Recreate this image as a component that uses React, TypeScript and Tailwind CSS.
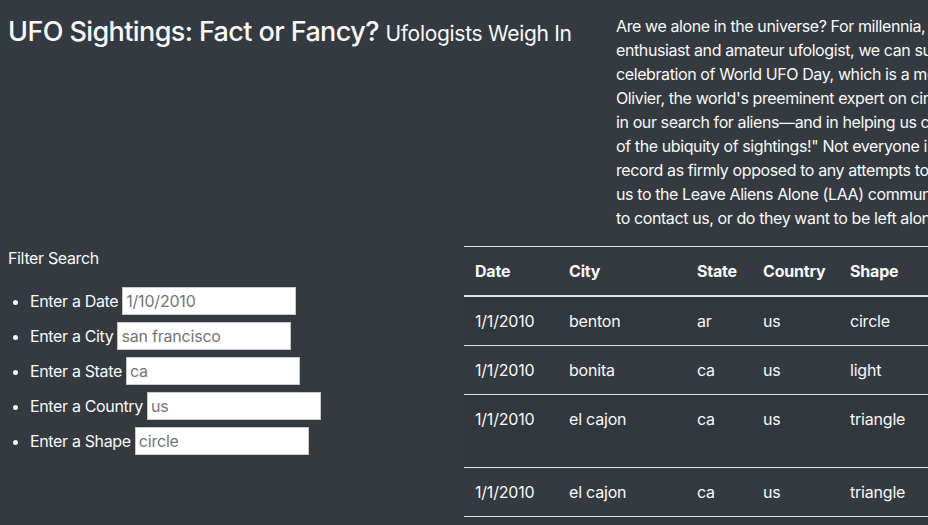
import React from 'react';

const intro = [
  'Are we alone in the universe? For millennia, humans have gazed at the night sky and wondered. As an avid UFO',
  'enthusiast and amateur ufologist, we can surmise that the answer is a resounding "No!" In honor of our',
  'celebration of World UFO Day, which is a most sacred holiday for us, we spoke with the esteemed Dana',
  "Olivier, the world's preeminent expert on circular objects in the sky. \"The internet has been a great help",
  'in our search for aliens—and in helping us convince skeptics,\" said Olivier. \"Just look at this data and see',
  'of the ubiquity of sightings!" Not everyone is convinced, though. Some ufologists have gone on the',
  'record as firmly opposed to any attempts to reach out to extraterrestrials. Their concerns have led',
  'us to the Leave Aliens Alone (LAA) community, which asks an important question: do aliens want us',
  'to contact us, or do they want to be left alone? We may never know the answer.',
];

const filters = [
  { label: 'Enter a Date', value: '1/10/2010' },
  { label: 'Enter a City', value: 'san francisco' },
  { label: 'Enter a State', value: 'ca' },
  { label: 'Enter a Country', value: 'us' },
  { label: 'Enter a Shape', value: 'circle' },
];

const sightings = [
  { date: '1/1/2010', city: 'benton', state: 'ar', country: 'us', shape: 'circle', duration: '5 mins.', comments: ['4 bright green circles high in the sky going in circles then one bright green light at my front door.'] },
  { date: '1/1/2010', city: 'bonita', state: 'ca', country: 'us', shape: 'light', duration: '13 minutes', comments: ['Three bright red lights witnessed floating stationary over San Diego New Years Day 2010'] },
  { date: '1/1/2010', city: 'el cajon', state: 'ca', country: 'us', shape: 'triangle', duration: '5 minutes', comments: ['It was a clear night and we were standing outside when we saw a shape moving', 'slowly across the sky toward the east with no sound.'] },
  { date: '1/1/2010', city: 'el cajon', state: 'ca', country: 'us', shape: 'triangle', duration: '2 minutes', comments: ['Triangle shaped object with 3 red lights seen over El Cajon, CA'] },
];

export default function App() {
  return (
    <div className="min-h-[525px] w-full overflow-hidden bg-[#343a40] text-[#f8f9fa] font-['Inter','Liberation_Sans',sans-serif] text-[16px] leading-6">
      {/* Header row */}
      <div className="flex pt-[14px]">
        <div className="w-[608px] shrink-0 pl-2">
          <h1 className="text-[27px] font-medium leading-[35px] tracking-[-0.6px] whitespace-nowrap">
            UFO Sightings: Fact or Fancy?{' '}
            <small className="text-[21px] font-normal tracking-[-0.3px]">Ufologists Weigh In</small>
          </h1>
        </div>
        <div className="shrink-0 pl-2 tracking-[-0.4px]">
          {intro.map((line, i) => (
            <div key={i} className="whitespace-nowrap">{line}</div>
          ))}
        </div>
      </div>

      {/* Filters + table */}
      <div className="mt-4 flex">
        <div className="w-[464px] shrink-0 pl-2 tracking-[-0.35px]">
          <div>Filter Search</div>
          <ul className="mt-[13px] list-disc pl-[22px]">
            {filters.map((f) => (
              <li key={f.label} className="h-[35px]">
                <div className="flex h-[35px] items-center gap-1">
                  <span className="whitespace-nowrap">{f.label}</span>
                  <input
                    readOnly
                    placeholder={f.value}
                    className="h-[28px] w-[174px] border border-[#c8c8c8] bg-white px-[3px] text-[16px] tracking-[-0.2px] text-[#6c757d] placeholder:text-[#757575] outline-none"
                  />
                </div>
              </li>
            ))}
          </ul>
        </div>

        <table className="shrink-0 border-collapse border-t border-[#dee2e6] text-left tracking-[-0.2px]">
          <thead>
            <tr className="border-b-2 border-[#dee2e6]">
              <th className="w-[94px] px-[11px] py-3 font-bold">Date</th>
              <th className="w-[128px] px-[11px] py-3 font-bold">City</th>
              <th className="w-[66px] px-[11px] py-3 font-bold">State</th>
              <th className="w-[87px] px-[11px] py-3 font-bold">Country</th>
              <th className="w-[110px] px-[11px] py-3 font-bold">Shape</th>
              <th className="w-[110px] px-[11px] py-3 font-bold">Duration</th>
              <th className="w-[640px] px-[11px] py-3 font-bold">Comments</th>
            </tr>
          </thead>
          <tbody>
            {sightings.map((s, i) => (
              <tr key={i} className={`border-b border-[#dee2e6] align-top ${i % 2 === 0 ? 'bg-[#31373d]' : ''}`}>
                <td className="px-[11px] py-3">{s.date}</td>
                <td className="px-[11px] py-3">{s.city}</td>
                <td className="px-[11px] py-3">{s.state}</td>
                <td className="px-[11px] py-3">{s.country}</td>
                <td className="px-[11px] py-3">{s.shape}</td>
                <td className="px-[11px] py-3 whitespace-nowrap">{s.duration}</td>
                <td className="px-[11px] py-3">
                  {s.comments.map((c, j) => (
                    <div key={j} className="whitespace-nowrap">{c}</div>
                  ))}
                </td>
              </tr>
            ))}
          </tbody>
        </table>
      </div>
    </div>
  );
}
